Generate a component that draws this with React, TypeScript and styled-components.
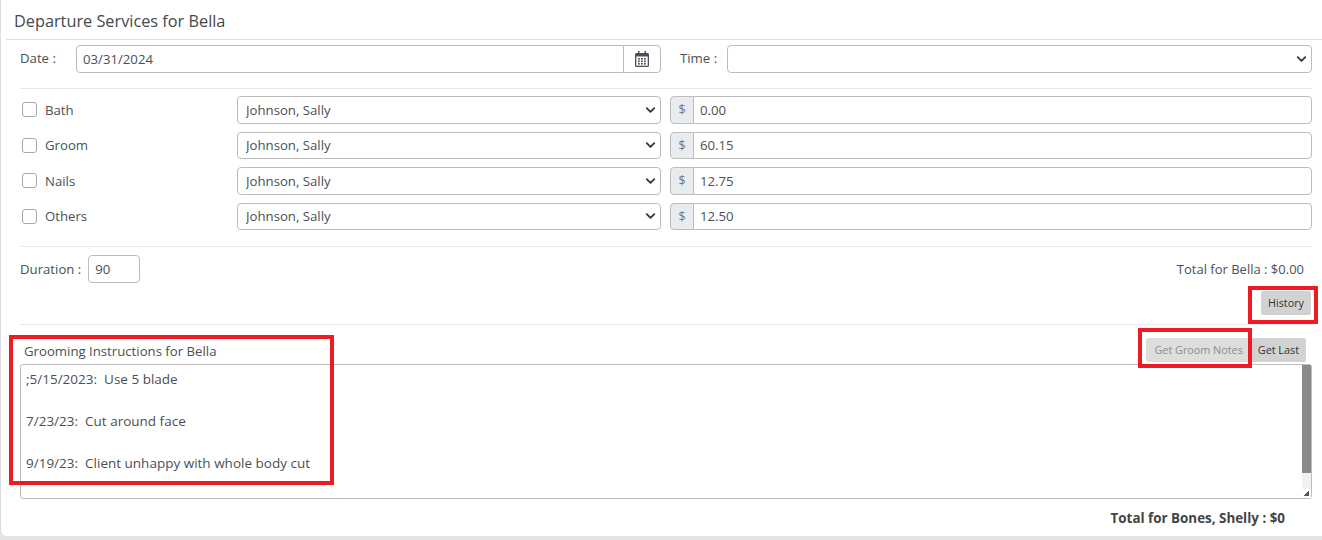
import React from "react";
import styled, { createGlobalStyle } from "styled-components";

const chevron =
  "url(\"data:image/svg+xml,%3csvg xmlns='http://www.w3.org/2000/svg' viewBox='0 0 16 16'%3e%3cpath fill='none' stroke='%23343a40' stroke-linecap='round' stroke-linejoin='round' stroke-width='3' d='M2 5l6 6 6-6'/%3e%3c/svg%3e\")";

const GlobalStyle = createGlobalStyle`
  html, body {
    margin: 0;
    background: #e4e4e4;
  }
  * {
    box-sizing: border-box;
  }
  body {
    font-family: "Open Sans", "Noto Sans", sans-serif;
    font-size: 13.2px;
    color: #495057;
    overflow: hidden;
  }
`;

const Page = styled.div`
  position: relative;
  width: 1322px;
  height: 540px;
  background: #e4e4e4;
`;

const Card = styled.div`
  width: 1322px;
  height: 536px;
  padding-left: 5px;
  background: #fff;
  border-left: 1px solid #dcdcdc;
  border-bottom-left-radius: 6px;
`;

const Title = styled.h2`
  height: 40px;
  margin: 0;
  padding: 0 0 0 8px;
  font-size: 16.3px;
  font-weight: 500;
  line-height: 42px;
  color: #43484e;
  border-bottom: 1px solid #dfdfdf;
`;

const Body = styled.div`
  padding: 5px 10px 0 14px;
`;

const Label = styled.label<{ $width?: number }>`
  flex: none;
  width: ${(p) => (p.$width ? `${p.$width}px` : "auto")};
  white-space: nowrap;
`;

const DateRow = styled.div`
  display: flex;
  align-items: center;
  height: 28px;

  ${Label} {
    padding-bottom: 2px;
  }
`;

const Group = styled.div<{ $width: number; $gap?: number }>`
  display: flex;
  flex: none;
  width: ${(p) => p.$width}px;
  height: 100%;
  margin-right: ${(p) => p.$gap ?? 0}px;
`;

const TextInput = styled.input`
  flex: 1;
  min-width: 0;
  height: 100%;
  padding: 0 6px;
  font: inherit;
  color: #495057;
  background: #fff;
  border: 1px solid #bdbdbd;
  border-radius: 4px;
  outline: none;
`;

const GroupInput = styled(TextInput)<{ $addon: "start" | "end" }>`
  ${(p) =>
    p.$addon === "end"
      ? "border-top-right-radius: 0; border-bottom-right-radius: 0;"
      : "border-top-left-radius: 0; border-bottom-left-radius: 0; margin-left: -1px;"}
`;

const CalendarAddon = styled.span`
  display: flex;
  flex: none;
  align-items: center;
  justify-content: center;
  width: 38px;
  margin-left: -1px;
  background: #fff;
  border: 1px solid #bdbdbd;
  border-radius: 0 4px 4px 0;
`;

const DollarAddon = styled.span`
  display: flex;
  flex: none;
  align-items: center;
  justify-content: center;
  width: 24px;
  font-size: 12.5px;
  color: #6f7479;
  background: #e9ecef;
  border: 1px solid #bdbdbd;
  border-radius: 4px 0 0 4px;
`;

const Select = styled.select<{ $width: number; $gap?: number }>`
  flex: none;
  width: ${(p) => p.$width}px;
  height: 100%;
  margin-right: ${(p) => p.$gap ?? 0}px;
  padding: 0 24px 0 8px;
  font: inherit;
  color: #495057;
  background: #fff ${chevron} no-repeat right 4px center / 11px 10px;
  border: 1px solid #bdbdbd;
  border-radius: 4px;
  outline: none;
  appearance: none;
`;

const Rule = styled.hr<{ $top: number; $bottom: number }>`
  height: 1px;
  margin: ${(p) => p.$top}px 0 ${(p) => p.$bottom}px;
  background: #e6e6e6;
  border: 0;
`;

const Services = styled.div`
  display: flex;
  flex-direction: column;
  gap: 8px;
`;

const ServiceRow = styled.div`
  display: flex;
  align-items: center;
  height: 27.5px;
`;

const Check = styled.input.attrs({ type: "checkbox" })`
  flex: none;
  width: 15px;
  height: 15px;
  margin: 0 8px 0 2px;
  background: #fff;
  border: 1px solid #a9a9a9;
  border-radius: 3px;
  appearance: none;
`;

const DurationRow = styled.div`
  display: flex;
  align-items: center;
  justify-content: space-between;
  height: 28px;
`;

const Duration = styled.div`
  display: flex;
  align-items: center;
  gap: 7px;
  height: 100%;
`;

const DurationInput = styled(TextInput)`
  flex: none;
  width: 52px;
`;

const TotalText = styled.span`
  margin-right: 8px;
  font-size: 13px;
`;

const HistoryRow = styled.div`
  display: flex;
  justify-content: flex-end;
  padding: 8px 1px 0 0;
`;

const Button = styled.button<{ $muted?: boolean }>`
  height: 24px;
  padding: 0 ${(p) => (p.$muted ? 8 : 7)}px 2px;
  font: inherit;
  font-size: 10.8px;
  color: ${(p) => (p.$muted ? "#8d8d8d" : "#333")};
  background: ${(p) => (p.$muted ? "#dedede" : "#d2d2d2")};
  border: 0;
  border-radius: 2px;
`;

const NotesHead = styled.div`
  display: flex;
  align-items: center;
  justify-content: space-between;
  height: 26px;
  padding: 0 6px 0 4px;
`;

const NotesActions = styled.div`
  display: flex;
  align-self: flex-start;
`;

const NotesBox = styled.div`
  position: relative;
  height: 135px;
`;

const Notes = styled.textarea`
  display: block;
  width: 100%;
  height: 100%;
  padding: 4px 5px;
  overflow: hidden;
  font: inherit;
  font-size: 13.5px;
  line-height: 21px;
  color: #495057;
  background: #fff;
  border: 1px solid #bdbdbd;
  border-radius: 3px;
  outline: none;
  resize: none;
`;

const ScrollBar = styled.div`
  position: absolute;
  top: 1px;
  right: 1px;
  bottom: 1px;
  display: flex;
  flex-direction: column;
  width: 9px;
  background: #f1f1f1;
`;

const ScrollThumb = styled.div`
  flex: none;
  height: 108px;
  background: #8a8a8a;
`;

const ScrollTrack = styled.div`
  flex: 1;
`;

const ResizeCorner = styled.div`
  display: flex;
  flex: none;
  align-items: center;
  justify-content: center;
  height: 9px;
  background: #fff;
`;

const GrandTotal = styled.div`
  padding: 10px 27px 0 0;
  font-size: 13.4px;
  font-weight: 700;
  text-align: right;
  color: #444;
`;

const Callout = styled.div<{ $x: number; $y: number; $w: number; $h: number }>`
  position: absolute;
  left: ${(p) => p.$x}px;
  top: ${(p) => p.$y}px;
  width: ${(p) => p.$w}px;
  height: ${(p) => p.$h}px;
  border: 4px solid #ed1c24;
  pointer-events: none;
`;

const CalendarIcon = () => (
  <svg width="14" height="16" viewBox="0 0 14 16" aria-hidden="true">
    <path fill="#495057" d="M3 0h1.5v2h5V0H11v2h1.5A1.5 1.5 0 0 1 14 3.5v11a1.5 1.5 0 0 1-1.5 1.5h-11A1.5 1.5 0 0 1 0 14.5v-11A1.5 1.5 0 0 1 1.5 2H3z" />
    <rect x="1.3" y="5.5" width="11.4" height="9.2" fill="#fff" />
    {[3, 6, 9].map((x) =>
      [7, 9.5, 12].map((y) => (
        <rect key={`${x}-${y}`} x={x} y={y} width="1.8" height="1.6" fill="#495057" />
      ))
    )}
  </svg>
);

const GripIcon = () => (
  <svg width="5" height="5" viewBox="0 0 5 5" aria-hidden="true">
    <path fill="#555" d="M4 0h1v5H0V4h1V3h1V2h1V1h1z" />
  </svg>
);

const services = [
  { name: "Bath", price: "0.00" },
  { name: "Groom", price: "60.15" },
  { name: "Nails", price: "12.75" },
  { name: "Others", price: "12.50" },
];

const notes = `;5/15/2023:  Use 5 blade

7/23/23:  Cut around face

9/19/23:  Client unhappy with whole body cut`;

const App = () => {
  return (
    <Page>
      <GlobalStyle />
      <Card>
        <Title>Departure Services for Bella</Title>
        <Body>
          <DateRow>
            <Label $width={56}>Date :</Label>
            <Group $width={585} $gap={19}>
              <GroupInput $addon="end" defaultValue="03/31/2024" />
              <CalendarAddon>
                <CalendarIcon />
              </CalendarAddon>
            </Group>
            <Label $width={47}>Time :</Label>
            <Select $width={585}>
              <option></option>
            </Select>
          </DateRow>
          <Rule $top={15} $bottom={7} />
          <Services>
            {services.map((s) => (
              <ServiceRow key={s.name}>
                <Check />
                <Label $width={192}>{s.name}</Label>
                <Select $width={424} $gap={9}>
                  <option>Johnson, Sally</option>
                </Select>
                <Group $width={642}>
                  <DollarAddon>$</DollarAddon>
                  <GroupInput $addon="start" defaultValue={s.price} />
                </Group>
              </ServiceRow>
            ))}
          </Services>
          <Rule $top={16} $bottom={8} />
          <DurationRow>
            <Duration>
              <Label>Duration :</Label>
              <DurationInput defaultValue="90" />
            </Duration>
            <TotalText>Total for Bella : $0.00</TotalText>
          </DurationRow>
          <HistoryRow>
            <Button>History</Button>
          </HistoryRow>
          <Rule $top={9} $bottom={13} />
          <NotesHead>
            <Label>Grooming Instructions for Bella</Label>
            <NotesActions>
              <Button $muted>Get Groom Notes</Button>
              <Button>Get Last</Button>
            </NotesActions>
          </NotesHead>
          <NotesBox>
            <Notes defaultValue={notes} />
            <ScrollBar>
              <ScrollThumb />
              <ScrollTrack />
              <ResizeCorner>
                <GripIcon />
              </ResizeCorner>
            </ScrollBar>
          </NotesBox>
          <GrandTotal>Total for Bones, Shelly : $0</GrandTotal>
        </Body>
      </Card>
      <Callout $x={9} $y={335} $w={325} $h={150} />
      <Callout $x={1138} $y={328} $w={114} $h={40} />
      <Callout $x={1248} $y={286} $w={70} $h={38} />
    </Page>
  );
};

export default App;
